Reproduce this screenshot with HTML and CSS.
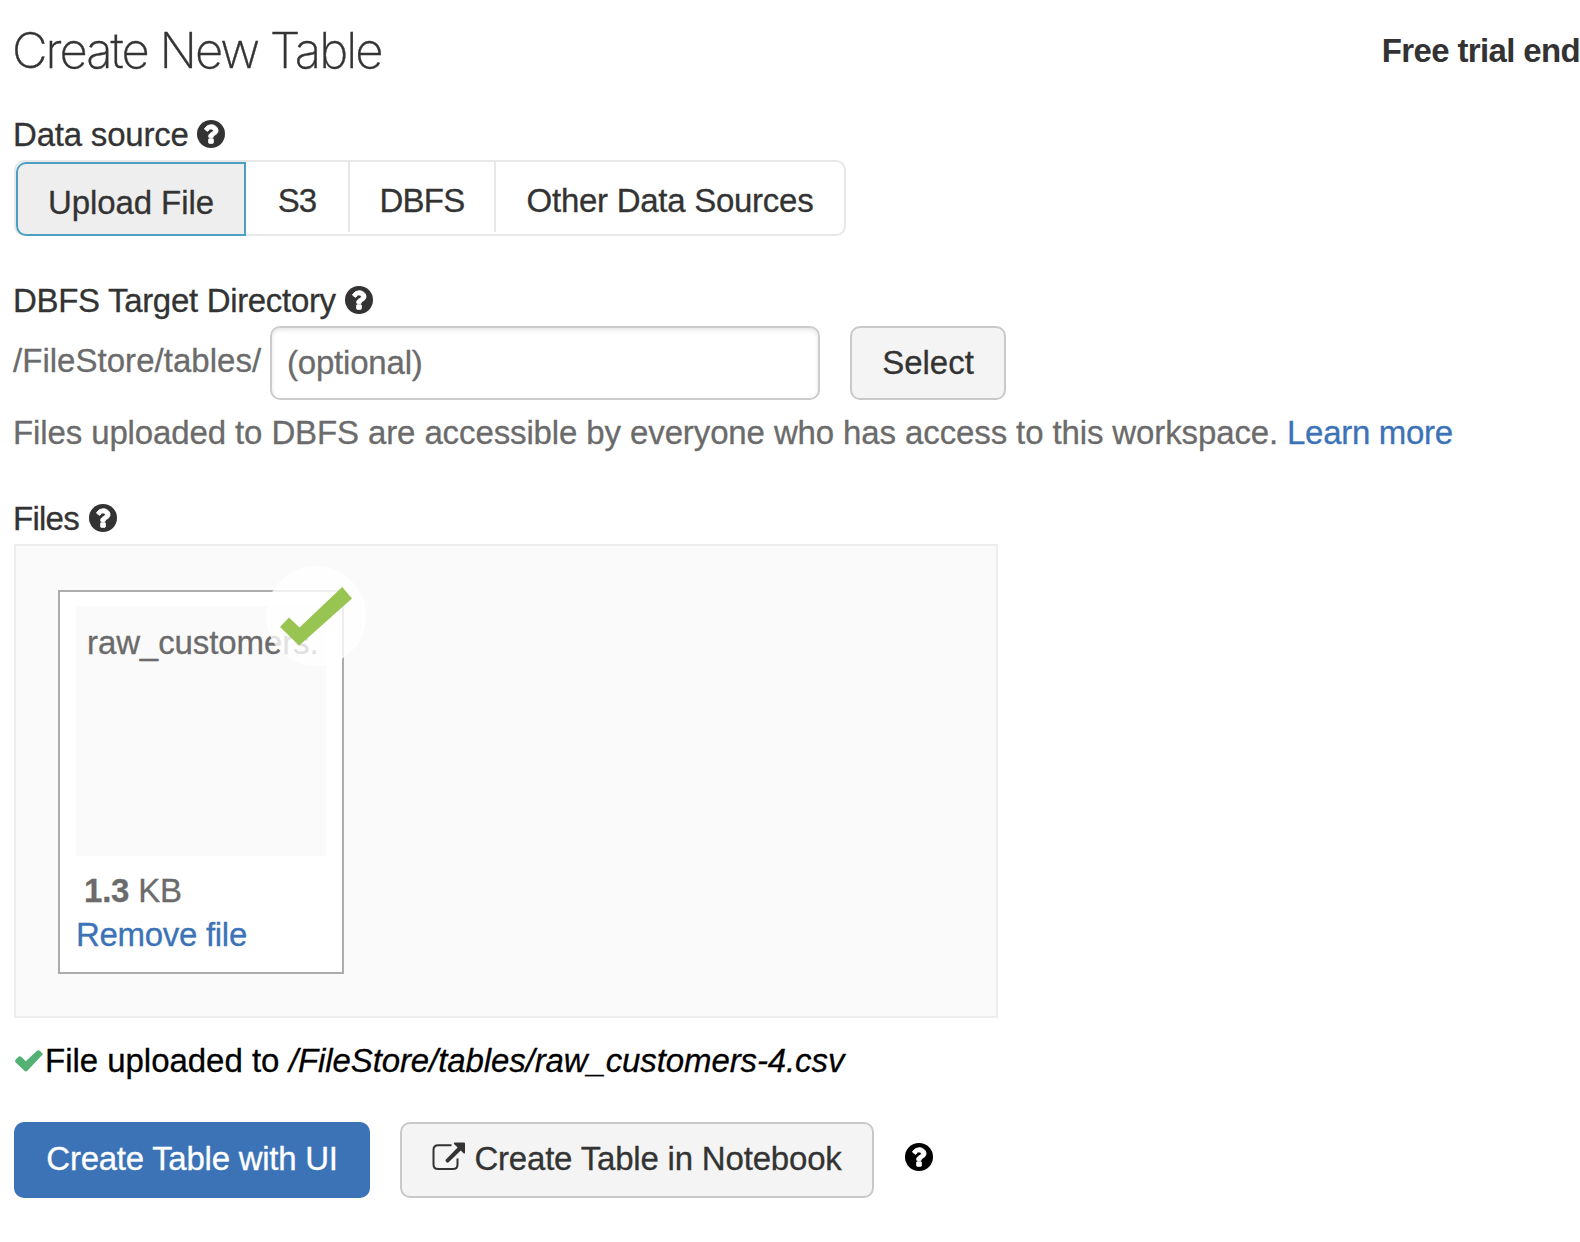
FILE: index.html
```html
<!DOCTYPE html>
<html lang="en">
<head>
<meta charset="utf-8">
<title>Create New Table</title>
<link rel="stylesheet" href="styles.css">
</head>
<body>
<svg class="sprite" aria-hidden="true">
  <symbol id="help" viewBox="0 0 1536 1536">
    <circle cx="768" cy="768" r="768" fill="currentColor"/>
    <path fill="#fff" stroke="#fff" stroke-width="50" d="M896 1248v-192q0-14-9-23t-23-9H672q-14 0-23 9t-9 23v192q0 14 9 23t23 9h192q14 0 23-9t9-23zM1152 576q0-88-55.500-163T958 297t-170-41q-243 0-371 213-15 24 8 42l132 100q7 6 19 6 16 0 25-12 53-68 86-92 34-24 86-24 48 0 85.500 26t37.500 59q0 38-20 61t-68 45q-63 28-115.500 86.500T640 892v36q0 14 9 23t23 9h192q14 0 23-9t9-23q0-19 21.500-49.500T972 829q32-18 49-28.500t46-35 44.500-48 28-60.500 12.500-81z"/>
  </symbol>
</svg>
<header class="header">
  <h1 class="title">Create New Table</h1>
  <div class="trial">Free trial end</div>
</header>
<main class="content">
  <div class="label"><span class="label-source">Data source</span><svg class="help"><use href="#help"/></svg></div>
  <nav class="tabs">
    <button class="tab tab-upload active">Upload File</button>
    <button class="tab tab-s3">S3</button>
    <button class="tab tab-dbfs">DBFS</button>
    <button class="tab tab-other">Other Data Sources</button>
  </nav>

  <div class="label label-gap"><span class="label-target">DBFS Target Directory</span><svg class="help"><use href="#help"/></svg></div>
  <div class="directory">
    <span class="path">/FileStore/tables/</span>
    <input class="input" placeholder="(optional)">
    <button class="btn btn-select">Select</button>
  </div>
  <p class="note"><span class="note-text">Files uploaded to DBFS are accessible by everyone who has access to this workspace.</span> <a class="link">Learn more</a></p>

  <div class="label label-files"><span class="label-short">Files</span><svg class="help"><use href="#help"/></svg></div>
  <section class="dropzone">
    <div class="card">
      <div class="preview"><div class="filename">raw_customers.</div></div>
      <div class="size"><strong>1.3</strong> <span>KB</span></div>
      <a class="link remove">Remove file</a>
      <div class="badge">
        <svg class="badge-check" viewBox="0 0 72 59"><path fill="#98c552" d="M62.200 0 72 11.500 19.200 58.500 0 39.900 9 30.500 19.500 40.500z"/></svg>
      </div>
    </div>
  </section>

  <div class="status">
    <svg class="status-check" viewBox="0 0 28 22"><path fill="#53b173" d="M27.400 4.800 12.400 20.800Q10.900 22 9.500 20.800L.700 12.400Q-.500 10.900.700 9.500L3.500 6.800Q4.800 5.700 6.200 6.800L10.800 11.200 22 .800Q23.400-.400 24.700.800L27.400 3.300Q28 4 27.400 4.800z"/></svg>
    <span class="status-text">File uploaded to</span>
    <em class="status-path">/FileStore/tables/raw_customers-4.csv</em>
  </div>

  <div class="actions">
    <button class="btn btn-primary">Create Table with UI</button>
    <button class="btn btn-notebook">
      <svg class="external" viewBox="0 0 34 29"><path fill="none" stroke="currentColor" stroke-width="2" d="M19.500 3.200H6.200Q1.500 3.200 1.500 7.700V22.500Q1.500 27 6.200 27H21Q25.500 27 25.500 22.500V16.500"/><path fill="currentColor" d="M22.500.500H32Q33 .500 33 1.500V11Q32.500 12 31.500 11.200L28.800 8.600 16.600 20.300Q15.500 21 14.600 20.200L13.800 19.300Q13 18.300 13.900 17.400L25.600 5.500 22 2Q21.500 1 22.500.500z"/></svg>
      <span>Create Table in Notebook</span>
    </button>
    <svg class="help help-dark"><use href="#help"/></svg>
  </div>
</main>
</body>
</html>
```
FILE: styles.css
```css
* { box-sizing: border-box; }

body {
  margin: 0;
  overflow: hidden;
  background: #fff;
  color: #333;
  font: 33px/40px "Liberation Sans", Arial, sans-serif;
  letter-spacing: -0.2px;
  white-space: nowrap;
  -webkit-text-stroke: 0.3px currentColor;
}

button, input { font: inherit; letter-spacing: inherit; color: inherit; margin: 0; }
svg { display: block; flex: none; }
.sprite { position: absolute; width: 0; height: 0; }

.header {
  display: flex;
  justify-content: space-between;
  height: 115px;
  padding: 21px 0 0 12px;
}
.title {
  margin: 0;
  font: 200 49px/60px Inter, sans-serif;
  letter-spacing: -2px;
  -webkit-text-stroke: 0.4px currentColor;
}
.trial {
  padding-top: 10px;
  font-weight: 700;
  letter-spacing: -0.65px;
  -webkit-text-stroke: 0;
}

.content { padding-left: 13px; }

.label { display: flex; align-items: center; height: 40px; }
.label-gap { margin-top: 45px; }
.label-files { margin-top: 46px; }
.label-source { width: 175px; }
.label-target { width: 323px; letter-spacing: -0.32px; }
.label-short { width: 67px; letter-spacing: -0.75px; }
.help { width: 28px; height: 28px; margin: 0 0 2px 9px; }

.tabs {
  display: flex;
  width: 832px;
  height: 76px;
  margin: 5px 0 0 1px;
  border: 2px solid #e7e8ea;
  border-radius: 10px;
}
.tab {
  height: 70px;
  padding: 8px 0 0;
  border: 0;
  border-right: 2px solid #e7e8ea;
  background: none;
}
.tab-upload { width: 230px; letter-spacing: -0.1px; }
.tab-s3 { width: 104px; letter-spacing: -1px; }
.tab-dbfs { width: 146px; letter-spacing: -0.7px; }
.tab-other { flex: 1; border: 0; letter-spacing: -0.27px; }
.tab.active {
  height: 74px;
  border: 2px solid #4b9fc0;
  border-radius: 10px 0 0 10px;
  background: #eee;
}

.directory { display: flex; align-items: center; height: 74px; margin-top: 5px; color: #6b6b6b; }
.path { width: 257px; padding-bottom: 4px; letter-spacing: 0.03px; }
.input {
  width: 550px;
  height: 74px;
  padding: 0 15px;
  border: 2px solid #ccc;
  border-radius: 10px;
  box-shadow: inset 0 2px 4px rgba(0, 0, 0, .1);
}
.input::placeholder { color: #6b6b6b; opacity: 1; }

.btn {
  display: flex;
  align-items: center;
  justify-content: center;
  height: 76px;
  padding: 0 0 2px;
  border: 2px solid #c9c9c9;
  border-radius: 10px;
  background: #f4f4f4;
  color: #333;
}
.btn-select { width: 156px; height: 74px; margin-left: 30px; padding: 0; letter-spacing: 0; }

.note { margin: 13px 0 0; color: #6b6b6b; }
.note-text { letter-spacing: -0.117px; }
.link { color: #3c73b7; letter-spacing: -0.3px; }

.dropzone {
  width: 984px;
  height: 474px;
  margin: 5px 0 0 1px;
  padding: 44px 42px;
  border: 2px solid #eee;
  background: #fafafa;
}
.card {
  position: relative;
  width: 286px;
  height: 384px;
  padding: 14px 16px;
  border: 2px solid #acacac;
  background: #fff;
}
.preview { width: 250px; height: 250px; padding: 17px 11px; background: #fafafa; }
.filename { color: #6b6b6b; letter-spacing: -0.1px; }
.size { margin-top: 15px; padding-left: 8px; color: #6b6b6b; }
.remove { display: block; margin-top: 4px; }
.badge {
  position: absolute;
  top: -26px;
  right: -24px;
  display: flex;
  width: 100px;
  height: 100px;
  padding: 21px 0 0 14px;
  border-radius: 50%;
  background: rgba(255, 255, 255, .8);
}
.badge-check { width: 72px; height: 59px; }

.status { display: flex; align-items: center; height: 40px; margin-top: 23px; padding-left: 2px; color: #000; }
.status-check { width: 28px; height: 22px; margin-right: 2px; }
.status-text { width: 244px; letter-spacing: -0.03px; }
.status-path { letter-spacing: -0.11px; }

.actions { display: flex; align-items: center; margin: 41px 0 0 1px; }
.btn-primary { width: 356px; border: 0; background: #3c73b7; color: #fff; letter-spacing: -0.26px; }
.btn-notebook { width: 474px; margin-left: 30px; letter-spacing: -0.19px; }
.external { width: 34px; height: 29px; margin: 0 8px 6px 0; }
.help-dark { margin: 0 0 7px 31px; color: #000; }
```
